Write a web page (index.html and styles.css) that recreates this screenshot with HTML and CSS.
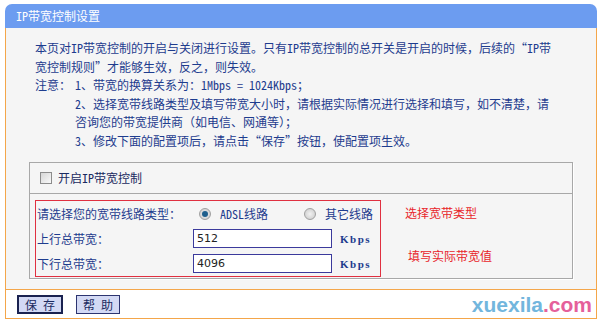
FILE: index.html
```html
<!DOCTYPE html>
<html lang="zh-CN">
<head>
  <meta charset="UTF-8">
  <title>IP带宽控制设置</title>
  <link rel="stylesheet" href="styles.css">
</head>
<body>
  <div class="panel">
    <div class="title">IP带宽控制设置</div>
    <div class="content">
      <div class="intro">
        <p>本页对IP带宽控制的开启与关闭进行设置。只有IP带宽控制的总开关是开启的时候，后续的“IP带<br>宽控制规则”才能够生效，反之，则失效。</p>
        <div class="note">
          <span class="note-head">注意：</span>
          <div class="note-list">
            <p>1、带宽的换算关系为：1Mbps = 1024Kbps；</p>
            <p>2、选择宽带线路类型及填写带宽大小时，请根据实际情况进行选择和填写，如不清楚，请<br>咨询您的带宽提供商（如电信、网通等）；</p>
            <p>3、修改下面的配置项后，请点击“保存”按钮，使配置项生效。</p>
          </div>
        </div>
      </div>

      <div class="box">
        <div class="box-row">
          <label class="check"><span class="checkbox"></span>开启IP带宽控制</label>
        </div>
        <div class="box-body">
          <div class="redbox">
            <div class="field">
              <span class="label">请选择您的宽带线路类型：</span>
              <span class="radio on"></span><span class="opt">ADSL线路</span>
              <span class="radio"></span><span class="opt">其它线路</span>
            </div>
            <div class="field">
              <span class="label">上行总带宽：</span>
              <span class="input">512</span><span class="unit">Kbps</span>
            </div>
            <div class="field">
              <span class="label">下行总带宽：</span>
              <span class="input">4096</span><span class="unit">Kbps</span>
            </div>
          </div>
          <div class="tips">
            <span class="tip tip1">选择宽带类型</span>
            <span class="tip tip2">填写实际带宽值</span>
          </div>
        </div>
      </div>
    </div>
    <div class="buttons">
      <span class="btn focus">保 存</span>
      <span class="btn">帮 助</span>
      <span class="mark"><span class="mark-a">xuexila</span><span class="mark-b">.com</span></span>
    </div>
  </div>
</body>
</html>
```

FILE: styles.css
```css
html, body {
  margin: 0;
  padding: 0;
  background: #fff;
  font-family: "Noto Sans Mono CJK SC", "Noto Sans CJK SC", monospace;
  font-size: 12px;
  line-height: 18px;
  color: #1e3c8e;
}
p {
  margin: 0;
}
.panel {
  margin: 4px 0 0 5px;
  width: 592px;
}
.title {
  height: 24px;
  line-height: 24px;
  background: #6c9cf0;
  color: #fff;
  padding-left: 11px;
  border-radius: 7px 7px 0 0;
}
.content {
  background: #f5f5f5;
  border-left: 1px solid #f4a64a;
  border-right: 1px solid #f4a64a;
  border-bottom: 1px solid #f4a64a;
  padding: 11px 0 10px 0;
}
.intro {
  padding: 0 10px 0 29px;
  line-height: 18.5px;
  white-space: nowrap;
}
.note {
  display: flex;
}
.note-head {
  width: 40px;
  flex: none;
}
.box {
  margin: 12px 23px 0 23px;
  border: 1px solid #a8a8a8;
  box-shadow: 1px 1px 0 #fff;
}
.box-row {
  height: 30px;
  display: flex;
  align-items: center;
  padding-left: 10px;
  border-bottom: 1px solid #a8a8a8;
}
.check {
  display: flex;
  align-items: center;
  gap: 6px;
  color: #1a2a60;
}
.checkbox {
  width: 10px;
  height: 10px;
  border: 1px solid #8c8c8c;
  background: linear-gradient(135deg, #d6d6d6, #fafafa);
}
.box-body {
  display: flex;
  padding: 6px 0 1px 5px;
}
.redbox {
  width: 343px;
  border: 1px solid #e03040;
  padding-left: 1px;
}
.field {
  display: flex;
  align-items: center;
  height: 25px;
  white-space: nowrap;
}
.label {
  width: 162px;
  flex: none;
}
.radio {
  width: 10px;
  height: 10px;
  border-radius: 50%;
  border: 1px solid #a0a0a0;
  background: radial-gradient(circle, #f2f2f2 0, #c8c8c8 100%);
  margin-right: 9px;
  position: relative;
  flex: none;
}
.radio.on::after {
  content: "";
  position: absolute;
  left: 2px;
  top: 2px;
  width: 6px;
  height: 6px;
  border-radius: 50%;
  background: #1f5f8c;
}
.opt {
  width: 84px;
  flex: none;
}
.input {
  width: 134px;
  height: 17px;
  line-height: 17px;
  border: 1px solid #3b3a9c;
  background: #fff;
  padding-left: 3px;
  margin-left: -6px;
  font-family: "DejaVu Sans", sans-serif;
  font-size: 11px;
  color: #222;
}
.unit {
  margin-left: 8px;
  font-family: "Liberation Serif", serif;
  font-weight: bold;
  font-size: 11px;
  letter-spacing: 1.5px;
}
.tips {
  display: flex;
  flex-direction: column;
  padding-left: 24px;
  color: #e8252b;
}
.tip1 {
  margin-top: 4px;
}
.tip2 {
  margin-top: 25px;
  margin-left: 3px;
}
.buttons {
  position: relative;
  display: flex;
  gap: 13px;
  align-items: center;
  height: 28px;
  padding-left: 11px;
  border-left: 1px solid #f4a64a;
  border-right: 1px solid #f4a64a;
  border-bottom: 1px solid #f4a64a;
}
.btn {
  width: 42px;
  height: 17px;
  line-height: 17px;
  text-align: center;
  background: #d3d9f4;
  border: 1px solid #2c3470;
  color: #1a2a60;
}
.btn.focus {
  border: 2px solid #1a2250;
  height: 15px;
  line-height: 15px;
}
.mark {
  position: absolute;
  right: 4px;
  bottom: 1px;
  font-family: "Liberation Sans", sans-serif;
  font-weight: bold;
  font-size: 21px;
  line-height: 24px;
}
.mark-a {
  color: #72b6dd;
}
.mark-b {
  color: #e5609a;
}
```
